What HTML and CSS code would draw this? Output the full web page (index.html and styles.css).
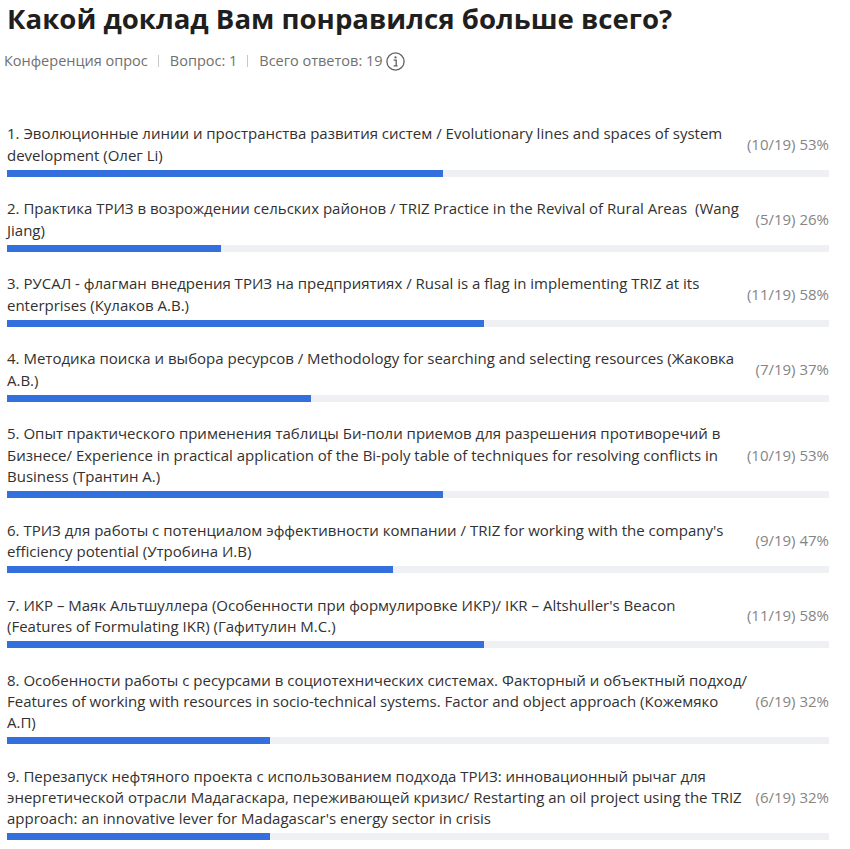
FILE: index.html
```html
<!DOCTYPE html>
<html lang="ru">
<head>
<meta charset="utf-8">
<title>Опрос</title>
<link rel="stylesheet" href="styles.css">
</head>
<body>
<div class="page">
  <h1 class="title">Какой доклад Вам понравился больше всего?</h1>
  <div class="meta">
    <span>Конференция опрос</span>
    <span class="sep"></span>
    <span>Вопрос: 1</span>
    <span class="sep"></span>
    <span>Всего ответов: 19</span>
    <svg class="info" width="19" height="19" viewBox="0 0 19 19"><circle cx="9.5" cy="9.5" r="8.6" fill="none" stroke="#5f5f5f" stroke-width="1.3"/><circle cx="9.5" cy="5.4" r="1.1" fill="#5f5f5f"/><path d="M7.6 8.1h2.6v5.6M7.6 13.9h4" fill="none" stroke="#5f5f5f" stroke-width="1.3"/></svg>
  </div>
  <ul class="results">
    <li class="item">
      <div class="row"><span class="text">1. Эволюционные линии и пространства развития систем / Evolutionary lines and spaces of system development (Олег Li)</span><span class="val">(10/19) 53%</span></div>
      <div class="track"><div class="fill" style="width:53%"></div></div>
    </li>
    <li class="item">
      <div class="row"><span class="text">2. Практика ТРИЗ в возрождении сельских районов / TRIZ Practice in the Revival of Rural Areas &nbsp;(Wang Jiang)</span><span class="val">(5/19) 26%</span></div>
      <div class="track"><div class="fill" style="width:26%"></div></div>
    </li>
    <li class="item">
      <div class="row"><span class="text">3. РУСАЛ - флагман внедрения ТРИЗ на предприятиях / Rusal is a flag in implementing TRIZ at its enterprises (Кулаков А.В.)</span><span class="val">(11/19) 58%</span></div>
      <div class="track"><div class="fill" style="width:58%"></div></div>
    </li>
    <li class="item">
      <div class="row"><span class="text">4. Методика поиска и выбора ресурсов / Methodology for searching and selecting resources (Жаковка А.В.)</span><span class="val">(7/19) 37%</span></div>
      <div class="track"><div class="fill" style="width:37%"></div></div>
    </li>
    <li class="item">
      <div class="row"><span class="text">5. Опыт практического применения таблицы Би-поли приемов для разрешения противоречий в Бизнесе/ Experience in practical application of the Bi-poly table of techniques for resolving conflicts in Business (Трантин А.)</span><span class="val">(10/19) 53%</span></div>
      <div class="track"><div class="fill" style="width:53%"></div></div>
    </li>
    <li class="item">
      <div class="row"><span class="text">6. ТРИЗ для работы с потенциалом эффективности компании / TRIZ for working with the company's efficiency potential (Утробина И.В)</span><span class="val">(9/19) 47%</span></div>
      <div class="track"><div class="fill" style="width:47%"></div></div>
    </li>
    <li class="item">
      <div class="row"><span class="text">7. ИКР – Маяк Альтшуллера (Особенности при формулировке ИКР)/ IKR – Altshuller's Beacon (Features of Formulating IKR) (Гафитулин М.С.)</span><span class="val">(11/19) 58%</span></div>
      <div class="track"><div class="fill" style="width:58%"></div></div>
    </li>
    <li class="item">
      <div class="row"><span class="text">8. Особенности работы с ресурсами в социотехнических системах. Факторный и объектный подход/ Features of working with resources in socio-technical systems. Factor and object approach (Кожемяко А.П)</span><span class="val">(6/19) 32%</span></div>
      <div class="track"><div class="fill" style="width:32%"></div></div>
    </li>
    <li class="item">
      <div class="row"><span class="text">9. Перезапуск нефтяного проекта с использованием подхода ТРИЗ: инновационный рычаг для энергетической отрасли Мадагаскара, переживающей кризис/ Restarting an oil project using the TRIZ approach: an innovative lever for Madagascar's energy sector in crisis</span><span class="val">(6/19) 32%</span></div>
      <div class="track"><div class="fill" style="width:32%"></div></div>
    </li>
  </ul>
</div>
</body>
</html>
```

FILE: styles.css
```css
html, body {
  margin: 0;
  padding: 0;
  background: #ffffff;
}
.page {
  font-family: "Open Sans", "Noto Sans", sans-serif;
  padding: 0 21px 0 7px;
  color: #323130;
}
.title {
  margin: 0;
  font-size: 27.6px;
  line-height: 36px;
  font-weight: 700;
  color: #1f1f1f;
}
.meta {
  display: flex;
  align-items: center;
  margin: 15px 0 0 -3px;
  font-size: 14.5px;
  line-height: 20px;
  color: #707070;
}
.sep {
  display: inline-block;
  width: 1px;
  height: 12px;
  background: #c8c8c8;
  margin: 0 11px 0 10px;
}
.info {
  margin-left: 3px;
}
.results {
  list-style: none;
  margin: 52.3px 0 0;
  padding: 0;
}
.item {
  margin-bottom: 21.6px;
}
.row {
  display: flex;
  align-items: center;
  gap: 8px;
}
.text {
  flex: 1;
  font-size: 15px;
  line-height: 21.2px;
  color: #323130;
}
.val {
  white-space: nowrap;
  font-size: 15px;
  line-height: 21.2px;
  color: #858585;
}
.track {
  margin-top: 4px;
  height: 7px;
  background: #eef0f3;
}
.fill {
  height: 100%;
  background: #3370de;
}
```
